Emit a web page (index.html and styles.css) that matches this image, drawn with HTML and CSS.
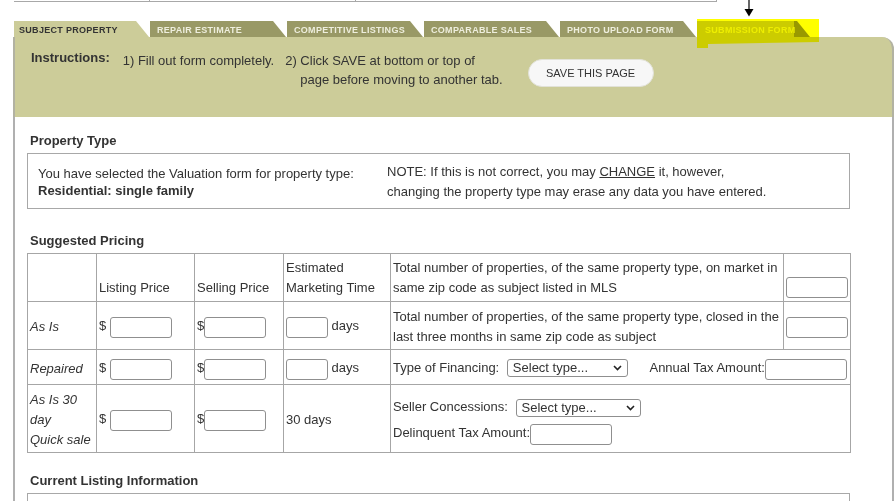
FILE: index.html
```html
<!DOCTYPE html>
<html lang="en">
<head>
  <meta charset="UTF-8" />
  <meta name="viewport" content="width=device-width, initial-scale=1.0" />
  <title>Valuation Form - Subject Property</title>
  <link rel="stylesheet" href="styles.css">
</head>
<body>
  <div class="prev-table"><span></span><span></span><span></span></div>

  <svg class="arrow" width="10" height="18" viewBox="0 0 10 18">
    <line x1="5" y1="0" x2="5" y2="11" stroke="#000" stroke-width="1.2" />
    <polygon points="0.5,9 9.5,9 5,16.5" fill="#000" />
  </svg>

  <div class="page">
    <div class="tabs">
      <div class="tab active">SUBJECT PROPERTY</div>
      <div class="tab">REPAIR ESTIMATE</div>
      <div class="tab">COMPETITIVE LISTINGS</div>
      <div class="tab">COMPARABLE SALES</div>
      <div class="tab">PHOTO UPLOAD FORM</div>
      <div class="tab flagged">SUBMISSION FORM</div>
    </div>
    <div class="highlight"></div>

    <div class="panel">
      <div class="instr-label">Instructions:</div>
      <div class="instr-step first">1) Fill out form completely.</div>
      <div class="instr-step">2) Click SAVE at bottom or top of<br><span class="indent">page before moving to another tab.</span></div>
      <button class="save-btn">SAVE THIS PAGE</button>
    </div>

    <div class="content">
      <h3 class="section-title">Property Type</h3>
      <div class="box type-box">
        <div class="type-left">
          You have selected the Valuation form for property type:<br>
          <strong>Residential: single family</strong>
        </div>
        <div class="type-right">
          NOTE: If this is not correct, you may <a href="#" class="change-link">CHANGE</a> it, however,<br>
          changing the property type may erase any data you have entered.
        </div>
      </div>

      <h3 class="section-title spaced">Suggested Pricing</h3>
      <table class="pricing">
        <colgroup>
          <col style="width:69px"><col style="width:98px"><col style="width:89px">
          <col style="width:107px"><col style="width:393px"><col style="width:67px">
        </colgroup>
        <tr class="head">
          <td></td>
          <td>Listing Price</td>
          <td>Selling Price</td>
          <td>Estimated<br>Marketing Time</td>
          <td class="wide">Total number of properties, of the same property type, on market in<br>same zip code as subject listed in MLS</td>
          <td><input type="text" class="count"></td>
        </tr>
        <tr class="as-is">
          <td class="label">As Is</td>
          <td>$ <input type="text" class="money"></td>
          <td>$<input type="text" class="money"></td>
          <td><input type="text" class="days"> days</td>
          <td class="wide">Total number of properties, of the same property type, closed in the<br>last three months in same zip code as subject</td>
          <td><input type="text" class="count"></td>
        </tr>
        <tr class="repaired">
          <td class="label">Repaired</td>
          <td>$ <input type="text" class="money"></td>
          <td>$<input type="text" class="money"></td>
          <td><input type="text" class="days"> days</td>
          <td colspan="2" class="wide">Type of Financing:
            <span class="select-wrap fin"><select><option>Select type...</option></select><svg class="chev" width="9" height="6" viewBox="0 0 9 6"><polyline points="1,1 4.5,4.5 8,1" fill="none" stroke="#222" stroke-width="1.6" /></svg></span>
            <span class="tax-label">Annual Tax Amount:</span><input type="text" class="tax">
          </td>
        </tr>
        <tr class="quick">
          <td class="label">As Is 30<br>day<br>Quick sale</td>
          <td>$ <input type="text" class="money"></td>
          <td>$<input type="text" class="money"></td>
          <td>30 days</td>
          <td colspan="2" class="wide">
            <div class="split-line">Seller Concessions:
              <span class="select-wrap con"><select><option>Select type...</option></select><svg class="chev" width="9" height="6" viewBox="0 0 9 6"><polyline points="1,1 4.5,4.5 8,1" fill="none" stroke="#222" stroke-width="1.6" /></svg></span>
            </div>
            <div class="split-line">Delinquent Tax Amount:<input type="text" class="tax"></div>
          </td>
        </tr>
      </table>

      <h3 class="section-title listing">Current Listing Information</h3>
      <div class="box listing-box"></div>
    </div>
  </div>
</body>
</html>
```

FILE: styles.css
```css
body {
  margin: 0;
  font-family: "Liberation Sans", Arial, sans-serif;
  font-size: 13px;
  color: #333;
  background: #fff;
}
.prev-table {
  display: flex;
  margin-left: 14px;
  width: 703px;
  height: 1px;
  border-bottom: 1px solid #a8a8a8;
}
.prev-table span {
  border-right: 1px solid #a8a8a8;
}
.prev-table span:nth-child(1) {
  width: 135px;
}
.prev-table span:nth-child(2) {
  width: 205px;
}
.prev-table span:nth-child(3) {
  flex: 1;
}
.arrow {
  position: absolute;
  left: 744px;
  top: 0;
}
.page {
  position: relative;
  margin: 19px 0 0 13px;
  width: 881px;
}
.tabs {
  display: flex;
  gap: 1px;
  margin-left: 1px;
  height: 16px;
}
.tab {
  width: 136px;
  height: 16px;
  box-sizing: border-box;
  padding-left: 7px;
  background: #999966;
  color: #eeeedd;
  font-size: 9px;
  font-weight: bold;
  letter-spacing: 0.3px;
  line-height: 19px;
  white-space: nowrap;
  clip-path: polygon(0 0, calc(100% - 13px) 0, 100% 100%, 0 100%);
}
.tab:nth-child(1),
.tab:nth-child(4) {
  width: 135px;
}
.tab.active {
  background: #cccc99;
  color: #333;
  padding-left: 5px;
}
.tab.flagged {
  width: 113px;
  padding-left: 8px;
  background: linear-gradient(to right, #cccc99 97px, #999966 97px);
  color: #eeeedd;
}
.highlight {
  position: absolute;
  left: 684px;
  top: -2px;
  width: 122px;
  height: 29px;
  background: #ffff00;
  mix-blend-mode: multiply;
  clip-path: polygon(0 0, 122px 0, 122px 23px, 11px 25px, 11px 29px, 0 29px);
  z-index: 2;
}
.panel {
  display: flex;
  align-items: flex-start;
  height: 80px;
  box-sizing: border-box;
  padding: 11px 0 0 16px;
  background: #cccc99;
  border-left: 2px solid #b2b2a2;
  border-right: 2px solid #b2b2a2;
  border-top-right-radius: 12px;
}
.instr-label {
  font-weight: bold;
  line-height: 19px;
  margin-right: 13px;
}
.instr-step {
  line-height: 19px;
  margin-top: 3px;
}
.instr-step.first {
  margin-right: 11px;
}
.instr-step .indent {
  padding-left: 15px;
}
.save-btn {
  margin: 11px 0 0 25px;
  width: 126px;
  height: 28px;
  border: 1px solid #e2e2d8;
  border-radius: 14px;
  background: #f7f7f7;
  font-family: "Liberation Sans", Arial, sans-serif;
  font-size: 11px;
  color: #333;
  cursor: pointer;
}
.content {
  padding: 16px 0 40px 12px;
  border-left: 2px solid #b0b0b0;
  border-right: 2px solid #b0b0b0;
}
.section-title {
  font-size: 13px;
  font-weight: bold;
  line-height: 16px;
  margin: 0 0 4px 3px;
}
.section-title.spaced {
  margin-top: 24px;
}
.section-title.listing {
  margin-top: 20px;
}
.box {
  width: 823px;
  box-sizing: border-box;
  border: 1px solid #a8a8a8;
}
.type-box {
  display: flex;
  padding: 9px 10px 6px;
}
.type-left {
  width: 349px;
  line-height: 17px;
  padding-top: 2px;
}
.type-right {
  line-height: 20px;
  margin-top: -1px;
}
.change-link {
  color: #333;
}
.pricing {
  border-collapse: collapse;
  table-layout: fixed;
  width: 823px;
  border: 1px solid #b4b4b4;
}
.pricing td {
  border: 1px solid #a6a6a6;
  padding: 3px 2px 0;
  line-height: 20px;
  vertical-align: middle;
  white-space: nowrap;
}
.pricing td.label {
  font-style: italic;
}
.pricing tr.head {
  height: 48px;
}
.pricing tr.head td {
  vertical-align: bottom;
  padding: 0 2px 3px;
}
.pricing tr.as-is {
  height: 48px;
}
.pricing tr.repaired {
  height: 35px;
}
.pricing tr.quick {
  height: 68px;
}
.split-line {
  line-height: 26px;
}
input[type="text"] {
  height: 21px;
  box-sizing: border-box;
  padding: 1px 2px;
  border: 1px solid #8f8f8f;
  border-radius: 3px;
  font-family: "Liberation Sans", Arial, sans-serif;
  font-size: 13px;
  vertical-align: -2px;
}
.money {
  width: 62px;
}
.days {
  width: 42px;
}
.count {
  width: 62px;
}
.tax {
  width: 82px;
}
.select-wrap {
  position: relative;
  display: inline-block;
  margin-left: 4px;
  vertical-align: middle;
  line-height: 0;
}
.select-wrap select {
  -webkit-appearance: none;
  appearance: none;
  height: 18px;
  padding: 0 0 0 5px;
  border: 1px solid #8f8f8f;
  border-radius: 3px;
  background: #fff;
  font-family: "Liberation Sans", Arial, sans-serif;
  font-size: 13px;
  line-height: 16px;
  color: #333;
}
.select-wrap.fin select {
  width: 121px;
}
.select-wrap.con select {
  width: 125px;
}
.chev {
  position: absolute;
  right: 6px;
  top: 6px;
  pointer-events: none;
}
.tax-label {
  margin-left: 18px;
}
.listing-box {
  height: 40px;
}
```
